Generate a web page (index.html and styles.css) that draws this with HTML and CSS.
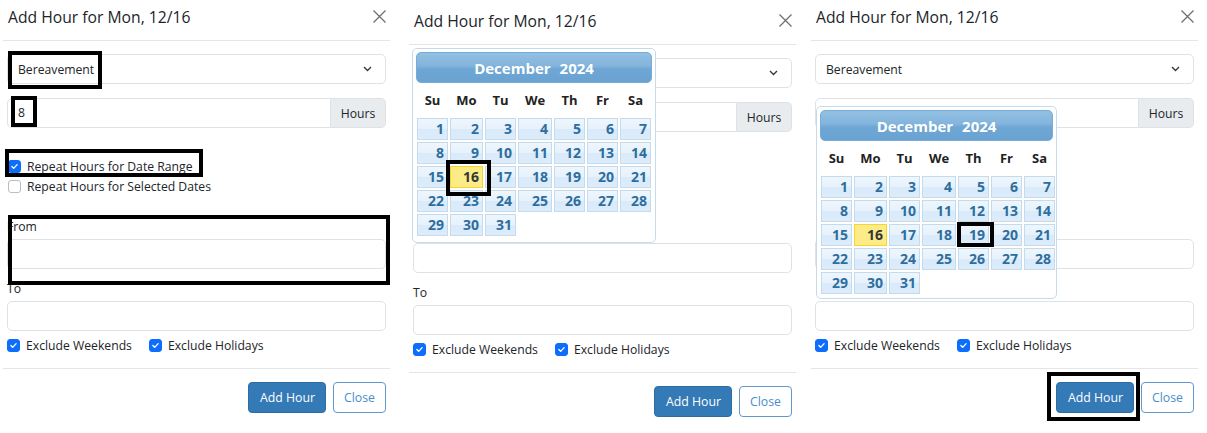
FILE: index.html
```html
<!DOCTYPE html>
<html>
<head>
<meta charset="utf-8">
<title>Add Hour</title>
<link rel="stylesheet" href="styles.css">
</head>
<body>
<div class="page">

  <!-- Panel 1 -->
  <section class="modal m1">
    <header class="mh">
      <h4 class="mt">Add Hour for Mon, 12/16</h4>
      <span class="x"><svg viewBox="0 0 13 13"><path d="M0.5 0.5L12.5 12.5M12.5 0.5L0.5 12.5"/></svg></span>
    </header>
    <div class="mb">
      <div class="sel"><span>Bereavement</span><svg class="chev" viewBox="0 0 9 6"><path d="M1 1l3.5 3.5L8 1"/></svg></div>
      <div class="ig"><div class="inp grow">8</div><span class="addon">Hours</span></div>
      <div class="stack">
        <label class="chk"><span class="cb on"><svg viewBox="0 0 13 13"><path d="M3.4 6.6l2.1 2.1 4.1-4.4"/></svg></span>Repeat Hours for Date Range</label>
        <label class="chk"><span class="cb"></span>Repeat Hours for Selected Dates</label>
      </div>
      <div class="fld"><div class="lbl">From</div><div class="inp"></div></div>
      <div class="fld last"><div class="lbl">To</div><div class="inp"></div></div>
      <div class="inl">
        <label class="chk"><span class="cb on"><svg viewBox="0 0 13 13"><path d="M3.4 6.6l2.1 2.1 4.1-4.4"/></svg></span>Exclude Weekends</label>
        <label class="chk"><span class="cb on"><svg viewBox="0 0 13 13"><path d="M3.4 6.6l2.1 2.1 4.1-4.4"/></svg></span>Exclude Holidays</label>
      </div>
    </div>
    <footer class="mf"><button class="btn pri">Add Hour</button><button class="btn out">Close</button></footer>
    <div class="mark mk-sel"></div>
    <div class="mark mk-8"></div>
    <div class="mark mk-rep"></div>
    <div class="mark mk-from"></div>
  </section>

  <!-- Panel 2 -->
  <section class="modal m2">
    <header class="mh">
      <h4 class="mt">Add Hour for Mon, 12/16</h4>
      <span class="x"><svg viewBox="0 0 13 13"><path d="M0.5 0.5L12.5 12.5M12.5 0.5L0.5 12.5"/></svg></span>
    </header>
    <div class="mb">
      <div class="sel"><span class="hid">Bereavement</span><svg class="chev" viewBox="0 0 9 6"><path d="M1 1l3.5 3.5L8 1"/></svg></div>
      <div class="ig"><div class="inp grow"><span class="hid">8</span></div><span class="addon">Hours</span></div>
      <div class="stack hid">
        <label class="chk"><span class="cb on"><svg viewBox="0 0 13 13"><path d="M3.4 6.6l2.1 2.1 4.1-4.4"/></svg></span>Repeat Hours for Date Range</label>
        <label class="chk"><span class="cb"></span>Repeat Hours for Selected Dates</label>
      </div>
      <div class="fld"><div class="lbl hid">From</div><div class="inp"></div></div>
      <div class="fld last"><div class="lbl">To</div><div class="inp"></div></div>
      <div class="inl">
        <label class="chk"><span class="cb on"><svg viewBox="0 0 13 13"><path d="M3.4 6.6l2.1 2.1 4.1-4.4"/></svg></span>Exclude Weekends</label>
        <label class="chk"><span class="cb on"><svg viewBox="0 0 13 13"><path d="M3.4 6.6l2.1 2.1 4.1-4.4"/></svg></span>Exclude Holidays</label>
      </div>
    </div>
    <footer class="mf"><button class="btn pri">Add Hour</button><button class="btn out">Close</button></footer>
    <div class="cal">
      <div class="calh"><span>December</span><span>2024</span></div>
      <div class="grid">
        <span class="dn">Su</span><span class="dn">Mo</span><span class="dn">Tu</span><span class="dn">We</span><span class="dn">Th</span><span class="dn">Fr</span><span class="dn">Sa</span>
        <span class="d">1</span><span class="d">2</span><span class="d">3</span><span class="d">4</span><span class="d">5</span><span class="d">6</span><span class="d">7</span>
        <span class="d">8</span><span class="d">9</span><span class="d">10</span><span class="d">11</span><span class="d">12</span><span class="d">13</span><span class="d">14</span>
        <span class="d">15</span><span class="d today">16</span><span class="d">17</span><span class="d">18</span><span class="d">19</span><span class="d">20</span><span class="d">21</span>
        <span class="d">22</span><span class="d">23</span><span class="d">24</span><span class="d">25</span><span class="d">26</span><span class="d">27</span><span class="d">28</span>
        <span class="d">29</span><span class="d">30</span><span class="d">31</span>
      </div>
    </div>
    <div class="mark mk-16"></div>
  </section>

  <!-- Panel 3 -->
  <section class="modal m3">
    <header class="mh">
      <h4 class="mt">Add Hour for Mon, 12/16</h4>
      <span class="x"><svg viewBox="0 0 13 13"><path d="M0.5 0.5L12.5 12.5M12.5 0.5L0.5 12.5"/></svg></span>
    </header>
    <div class="mb">
      <div class="sel"><span>Bereavement</span><svg class="chev" viewBox="0 0 9 6"><path d="M1 1l3.5 3.5L8 1"/></svg></div>
      <div class="ig"><div class="inp grow"><span class="hid">8</span></div><span class="addon">Hours</span></div>
      <div class="stack hid">
        <label class="chk"><span class="cb on"><svg viewBox="0 0 13 13"><path d="M3.4 6.6l2.1 2.1 4.1-4.4"/></svg></span>Repeat Hours for Date Range</label>
        <label class="chk"><span class="cb"></span>Repeat Hours for Selected Dates</label>
      </div>
      <div class="fld"><div class="lbl hid">From</div><div class="inp"></div></div>
      <div class="fld last"><div class="lbl hid">To</div><div class="inp"></div></div>
      <div class="inl">
        <label class="chk"><span class="cb on"><svg viewBox="0 0 13 13"><path d="M3.4 6.6l2.1 2.1 4.1-4.4"/></svg></span>Exclude Weekends</label>
        <label class="chk"><span class="cb on"><svg viewBox="0 0 13 13"><path d="M3.4 6.6l2.1 2.1 4.1-4.4"/></svg></span>Exclude Holidays</label>
      </div>
    </div>
    <footer class="mf"><button class="btn pri">Add Hour</button><button class="btn out">Close</button></footer>
    <div class="cal">
      <div class="calh"><span>December</span><span>2024</span></div>
      <div class="grid">
        <span class="dn">Su</span><span class="dn">Mo</span><span class="dn">Tu</span><span class="dn">We</span><span class="dn">Th</span><span class="dn">Fr</span><span class="dn">Sa</span>
        <span class="d">1</span><span class="d">2</span><span class="d">3</span><span class="d">4</span><span class="d">5</span><span class="d">6</span><span class="d">7</span>
        <span class="d">8</span><span class="d">9</span><span class="d">10</span><span class="d">11</span><span class="d">12</span><span class="d">13</span><span class="d">14</span>
        <span class="d">15</span><span class="d today">16</span><span class="d">17</span><span class="d">18</span><span class="d">19</span><span class="d">20</span><span class="d">21</span>
        <span class="d">22</span><span class="d">23</span><span class="d">24</span><span class="d">25</span><span class="d">26</span><span class="d">27</span><span class="d">28</span>
        <span class="d">29</span><span class="d">30</span><span class="d">31</span>
      </div>
    </div>
    <div class="mark mk-19"></div>
    <div class="mark mk-add"></div>
  </section>

</div>
</body>
</html>
```

FILE: styles.css
```css
* { box-sizing: border-box; margin: 0; padding: 0; }

html, body { min-height: 433px; }

body {
  margin: 0;
  background: #ffffff;
  font-family: "Open Sans", "Noto Sans", sans-serif;
  font-size: 12.2px;
  color: #212529;
}

.page {
  display: flex;
  align-items: flex-start;
  min-height: 433px;
}

.modal {
  position: relative;
  flex: none;
  width: 387px;
  min-height: 425px;
}
.m1 { margin-left: 3px; }
.m2 { margin-left: 19px; margin-top: 4px; }
.m3 { margin-left: 15px; }

/* content that sits under the date picker popup */
.hid { visibility: hidden; }

/* header */
.mh {
  display: flex;
  justify-content: space-between;
  align-items: flex-start;
  height: 41px;
  padding: 6px 4px 0 5px;
  border-bottom: 1px solid #e2e5e9;
}
.mt {
  font-size: 15.7px;
  font-weight: 500;
  line-height: 22px;
  color: #212529;
}
.x {
  display: block;
  width: 13px;
  height: 13px;
  margin-top: 4px;
}
.x svg { display: block; width: 13px; height: 13px; }
.x path { stroke: #6c6f73; stroke-width: 1.3; fill: none; }

/* body */
.mb { padding: 13px 4px 13px 4px; }

.sel, .inp {
  height: 30px;
  border: 1px solid #dee2e6;
  border-radius: 5px;
  background: #fff;
}
.sel {
  display: flex;
  align-items: center;
  justify-content: space-between;
  padding: 0 13px 0 10px;
  margin-bottom: 14px;
  color: #212529;
}
.chev { width: 9px; height: 6px; display: block; }
.chev path { stroke: #343a40; stroke-width: 1.4; fill: none; }

.ig {
  display: flex;
  height: 30px;
  margin-bottom: 28px;
}
.ig .grow {
  flex: 1;
  border-radius: 5px 0 0 5px;
  padding-left: 10px;
  line-height: 28px;
}
.addon {
  width: 55px;
  height: 30px;
  border: 1px solid #dee2e6;
  border-left: none;
  border-radius: 0 5px 5px 0;
  background: #e9ecef;
  display: flex;
  align-items: center;
  justify-content: center;
  color: #212529;
}

.stack { margin-bottom: 21px; padding-left: 1px; }
.chk {
  display: flex;
  align-items: center;
  height: 20px;
  color: #212529;
  white-space: nowrap;
}
.cb {
  flex: none;
  width: 13px;
  height: 13px;
  margin-right: 6px;
  border: 1px solid #b9bec4;
  border-radius: 3px;
  background: #fff;
}
.cb.on {
  background: #0d6efd;
  border-color: #0d6efd;
}
.cb svg { display: block; width: 11px; height: 11px; }
.cb path { stroke: #fff; stroke-width: 1.6; fill: none; stroke-linecap: round; stroke-linejoin: round; }

.fld { margin-bottom: 10px; }
.fld.last { margin-bottom: 4px; }
.lbl { height: 20px; line-height: 20px; margin-bottom: 2px; }

.inl { display: flex; gap: 17px; }

/* footer */
.mf {
  display: flex;
  justify-content: flex-end;
  gap: 7px;
  padding: 13px 4px 0 4px;
  border-top: 1px solid #e2e5e9;
}
.btn {
  height: 31px;
  padding: 0 10px;
  font-family: "Open Sans", "Noto Sans", sans-serif;
  font-size: 12.3px;
  border-radius: 4px;
  border: 1px solid #2e6da4;
  cursor: pointer;
}
.btn.pri { background: #337ab7; color: #fff; padding: 0 10px 0 11px; }
.btn.out { background: #fff; color: #4a8dcc; border-color: #5f98cf; }

/* calendar popup */
.cal {
  position: absolute;
  z-index: 2;
  background: #fff;
  border: 1px solid #c5dbec;
  border-radius: 5px;
  padding: 3px;
}
.m2 .cal { left: 3px; top: 44px; width: 244px; height: 195px; }
.m3 .cal { left: 5px; top: 106px; width: 241px; height: 193px; }

.calh {
  height: 31px;
  border: 1px solid #75acd9;
  border-radius: 5px;
  background: linear-gradient(#93c0e2 0%, #83b4dc 45%, #6ea6d4 55%, #6aa2d2 100%);
  color: #fff;
  font-weight: 700;
  font-size: 15px;
  display: flex;
  align-items: center;
  justify-content: center;
  gap: 9px;
}

.grid {
  display: grid;
  grid-template-columns: 31px 33px 31px 34px 31px 31px 31px;
  column-gap: 2px;
  row-gap: 2px;
  padding-left: 1px;
}
.dn {
  height: 33px;
  display: flex;
  align-items: center;
  justify-content: center;
  font-weight: 700;
  font-size: 13px;
  color: #222;
}
.d {
  height: 22px;
  border: 1px solid #c5dbec;
  background: linear-gradient(#eef6fd 0%, #e6f1fc 50%, #d9eafa 51%, #dcecfb 100%);
  color: #2e6e9e;
  font-weight: 700;
  font-size: 14px;
  line-height: 20px;
  text-align: right;
  padding-right: 3px;
}
.d.today {
  background: #fbec88;
  border-color: #fad42e;
  color: #363636;
}

/* annotation boxes drawn over the screenshot */
.mark {
  position: absolute;
  z-index: 3;
  border: 4px solid #000;
  pointer-events: none;
}
.mk-sel  { left: 5px;   top: 51px;  width: 94px;  height: 38px; }
.mk-8    { left: 8px;   top: 96px;  width: 26px;  height: 31px; }
.mk-rep  { left: 2px;   top: 149px; width: 198px; height: 28px; }
.mk-from { left: 5px;   top: 215px; width: 382px; height: 70px; }
.mk-16   { left: 37px;  top: 156px; width: 45px;  height: 36px; }
.mk-19   { left: 146px; top: 222px; width: 37px;  height: 25px; }
.mk-add  { left: 236px; top: 372px; width: 93px;  height: 49px; }
```
